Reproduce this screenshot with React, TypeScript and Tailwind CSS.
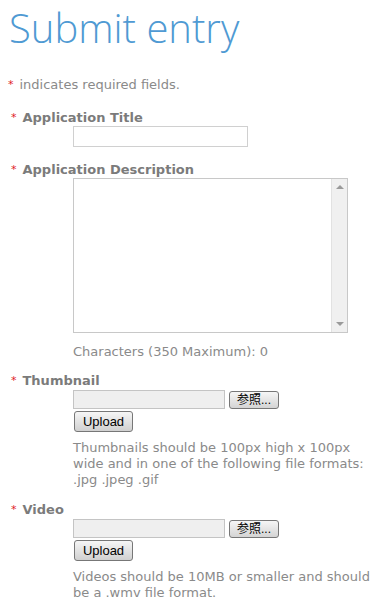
import React from "react";

const body = { fontFamily: '"DejaVu Sans", Verdana, sans-serif' };
const btnFont = { fontFamily: '"Liberation Sans", Arial, "Noto Sans CJK JP", sans-serif' };

function Req() {
	return <span className="mr-[6px] text-[11px] font-normal text-[#e0201f]">*</span>;
}

function Label({ children }: { children: React.ReactNode }) {
	return (
		<div className="flex items-center pl-[3px] text-[13px] font-bold leading-[14px] text-[#7b7b7b]">
			<Req />
			{children}
		</div>
	);
}

function FileField() {
	return (
		<div className="mt-[2px] flex flex-col items-start">
			<div className="flex items-center gap-[4px]">
				<div className="h-[19px] w-[152px] border border-[#c4c4c4] bg-[#efefef]" />
				<button
					type="button"
					style={btnFont}
					className="h-[18px] w-[50px] rounded-[3px] border border-[#777] bg-gradient-to-b from-[#f6f6f6] to-[#d4d4d4] text-[12px] leading-none text-black"
				>
					参照...
				</button>
			</div>
			<button
				type="button"
				style={btnFont}
				className="mt-[2px] ml-px h-[21px] w-[59px] rounded-[3px] border border-[#777] bg-gradient-to-b from-[#f6f6f6] to-[#d0d0d0] text-[13px] leading-none text-black"
			>
				Upload
			</button>
		</div>
	);
}

export default function App() {
	return (
		<div style={body} className="min-h-[609px] w-[391px] bg-white pl-[8px] text-[13px] text-[#8a8a8a]">
			<h1
				style={{ fontFamily: '"Open Sans", sans-serif' }}
				className="pl-[1px] text-[40px] font-light leading-[55px] text-[#4f9ad3]"
			>
				Submit entry
			</h1>
			<p className="mt-[22px] flex items-center leading-4">
				<Req />
				indicates required fields.
			</p>

			<div className="mt-[18px]">
				<Label>Application Title</Label>
				<div className="ml-[65px] mt-[1px]">
					<input className="h-[21px] w-[175px] border border-[#d0d0d0] outline-none" />
				</div>
			</div>

			<div className="mt-[16px]">
				<Label>Application Description</Label>
				<div className="ml-[65px] mt-[1px] flex h-[155px] w-[275px] border border-[#c8c8c8]">
					<textarea className="flex-1 resize-none outline-none" />
					<div className="flex w-[16px] flex-col items-center justify-between border-l border-[#e2e2e2] bg-[#f0f0f0] py-[6px]">
						<div className="h-0 w-0 border-x-[4px] border-b-[4px] border-x-transparent border-b-[#9a9a9a]" />
						<div className="h-0 w-0 border-x-[4px] border-t-[4px] border-x-transparent border-t-[#9a9a9a]" />
					</div>
				</div>
				<p className="ml-[65px] mt-[11px] leading-4">Characters (350 Maximum): 0</p>
			</div>

			<div className="mt-[14px]">
				<Label>Thumbnail</Label>
				<div className="ml-[65px]">
					<FileField />
					<p className="mt-[8px] w-[300px] leading-4">
						Thumbnails should be 100px high x 100px wide and in one of the following file formats: .jpg .jpeg .gif
					</p>
				</div>
			</div>

			<div className="mt-[15px]">
				<Label>Video</Label>
				<div className="ml-[65px]">
					<FileField />
					<p className="mt-[8px] w-[300px] leading-4">
						Videos should be 10MB or smaller and should be a .wmv file format.
					</p>
				</div>
			</div>
		</div>
	);
}
